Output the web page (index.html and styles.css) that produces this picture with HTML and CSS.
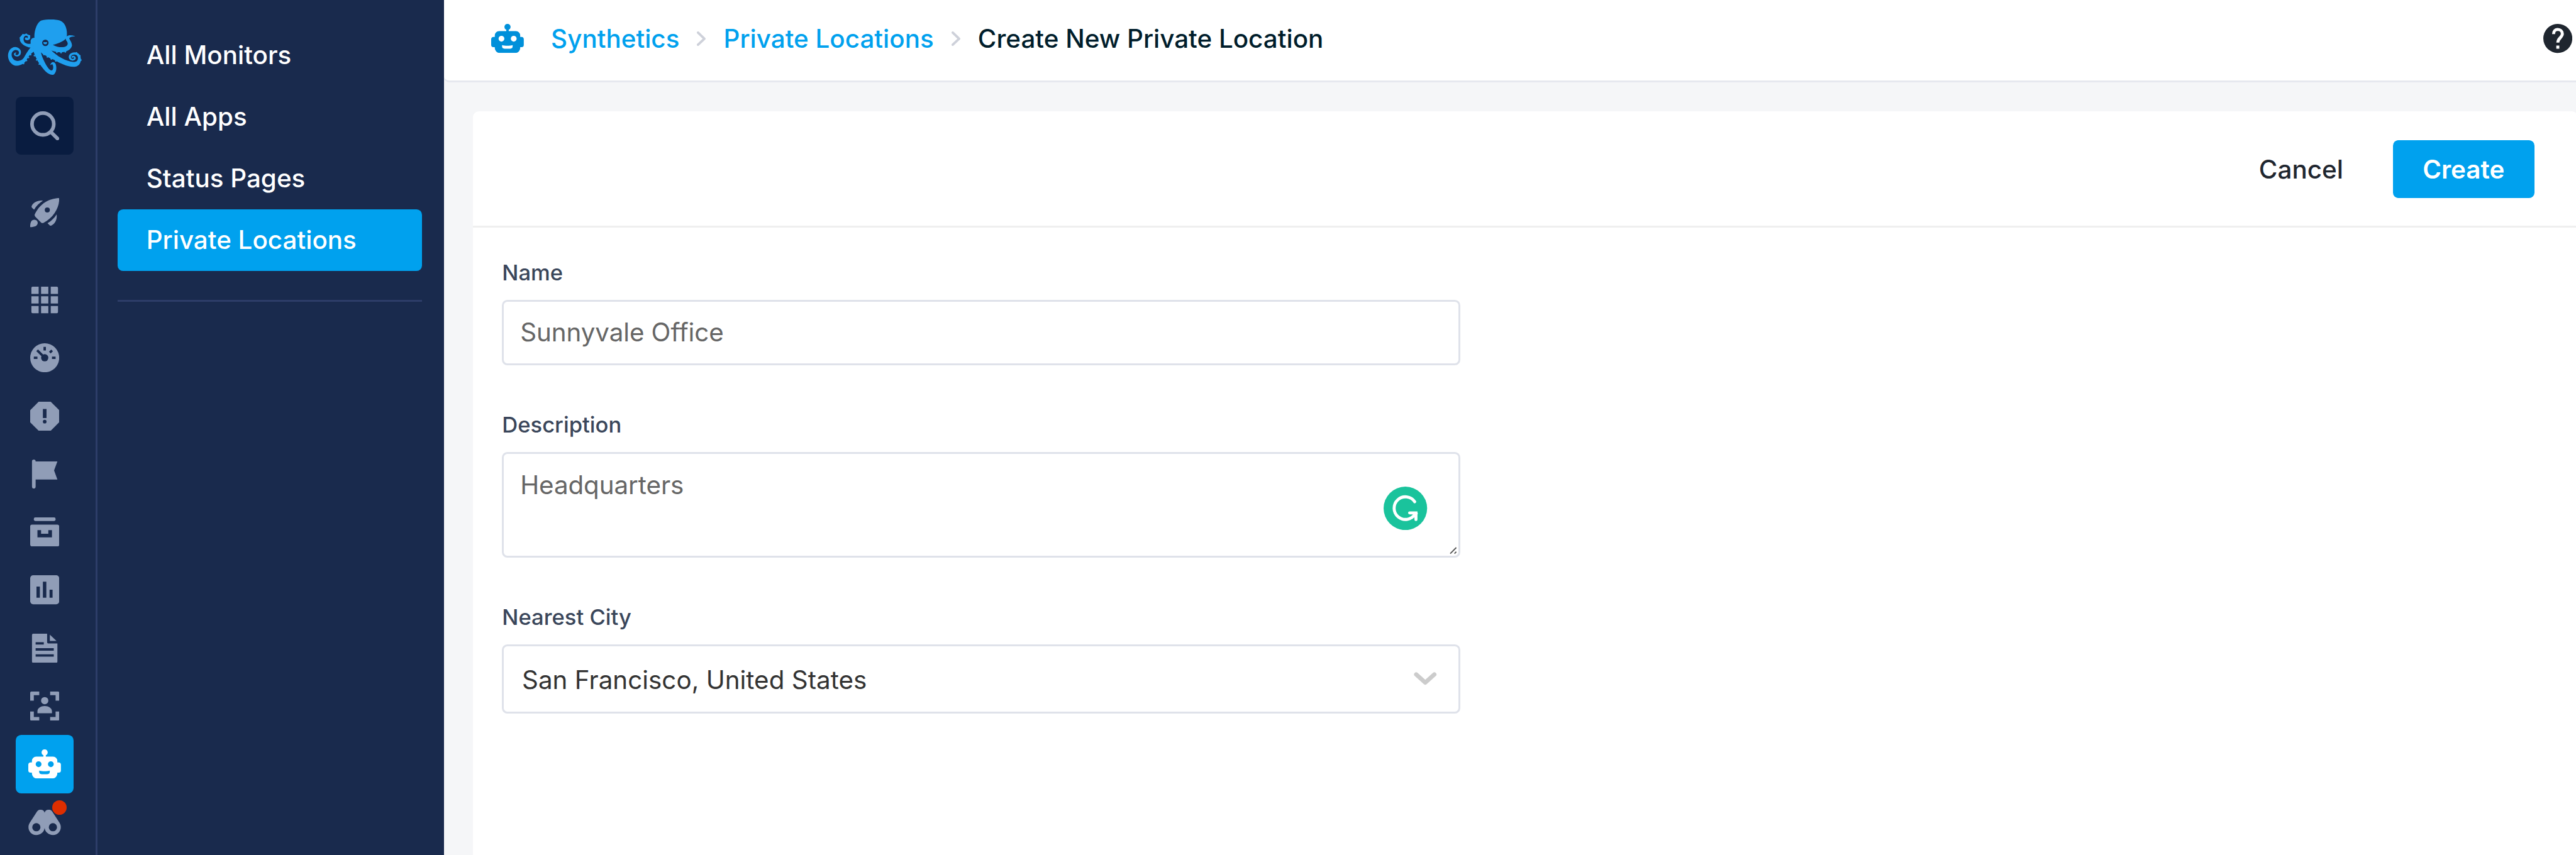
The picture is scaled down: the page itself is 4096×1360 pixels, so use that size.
FILE: index.html
```html
<!DOCTYPE html>
<html lang="en">
<head>
<meta charset="utf-8">
<title>Create New Private Location</title>
<link rel="stylesheet" href="styles.css">
</head>
<body>
<svg class="defs" aria-hidden="true">
  <symbol id="robot" viewBox="0 0 54 48">
    <path fill="currentColor" fill-rule="evenodd" d="M27 0a5 5 0 0 1 2 9.6V12h12a7 7 0 0 1 7 7v2.500h2a4 4 0 0 1 4 4v9a4 4 0 0 1-4 4h-2V40a8 8 0 0 1-8 8H14a8 8 0 0 1-8-8v-1.500H4a4 4 0 0 1-4-4v-9a4 4 0 0 1 4-4h2V19a7 7 0 0 1 7-7h12V9.600A5 5 0 0 1 27 0zM17 19.700a4.800 4.800 0 1 0 0 9.600a4.800 4.800 0 1 0 0-9.600zM37.300 19.700a4.800 4.800 0 1 0 0 9.600a4.800 4.800 0 1 0 0-9.600zM18 35v2a4 4 0 0 0 4 4h9.500a4 4 0 0 0 4-4v-2c-5 1.500-12.500 1.500-17.500 0z"/>
  </symbol>
</svg>
<div class="app">
  <nav class="rail">
    <svg class="logo" viewBox="0 0 450 348">
      <g class="octopus">
        <path d="M171 128C169 92 184 50 206 42C235 35 280 36 298 43C326 54 336 92 331 126C322 142 292 156 262 163C285 177 315 178 328 170C341 161 336 150 328 141C323 127 334 114 350 116C360 116 369 118 373 122C360 120 347 124 343 130C348 142 358 154 357 168C352 188 330 198 308 200C285 201 268 196 252 190L204 202L165 195C154 185 150 170 152 150C150 138 158 128 171 128Z"/>
        <path d="M165 163C150 175 130 205 118 228C105 246 80 248 67 235C52 218 55 195 75 189C92 187 98 200 92 209C88 215 80 215 77 211C76 205 79 203 83 204C80 199 70 202 69 210C70 222 90 226 101 212C110 195 98 176 77 174C50 174 38 200 40 222C43 250 65 268 85 267C105 265 122 254 130 241C140 220 155 205 170 195Z"/>
        <path d="M162 178C135 178 105 162 99 142C96 120 108 112 124 110C142 109 150 117 150 128C149 139 135 144 125 137C120 127 129 122 137 130C141 122 136 117 127 118C115 122 114 142 123 152C135 160 148 158 156 158Z"/>
        <path d="M163 185C172 218 188 250 213 280C230 302 250 316 266 311C281 300 282 275 276 258C270 246 254 244 249 264C254 262 258 257 261 261C266 271 265 287 257 290C247 292 233 272 221 248C212 230 206 216 203 200Z"/>
        <path d="M203 198C213 216 225 212 235 222C250 232 262 232 275 242C300 255 335 274 370 272C395 270 405 245 400 226C397 205 375 196 357 203C340 210 338 225 345 235C355 245 372 243 376 232C378 220 365 214 357 219C353 224 356 229 361 227C366 223 370 228 366 232C357 236 350 230 352 221C358 208 380 208 386 222C390 240 378 250 362 248C330 246 280 220 250 186Z"/>
        <circle cx="114" cy="114" r="5"/><circle cx="130" cy="112" r="5"/><circle cx="101" cy="129" r="4"/><circle cx="146" cy="119" r="4"/>
        <circle cx="152" cy="212" r="4"/><circle cx="141" cy="226" r="4"/><circle cx="131" cy="241" r="4"/><circle cx="117" cy="256" r="4"/>
        <circle cx="171" cy="217" r="4"/><circle cx="182" cy="238" r="4"/><circle cx="195" cy="259" r="4"/>
        <circle cx="218" cy="211" r="4"/><circle cx="235" cy="223" r="4"/><circle cx="255" cy="232" r="5"/><circle cx="277" cy="243" r="4"/>
        <circle cx="282" cy="200" r="4"/><circle cx="303" cy="202" r="4"/><circle cx="324" cy="198" r="4"/>
        <circle cx="379" cy="204" r="5"/><circle cx="396" cy="218" r="4"/><circle cx="401" cy="239" r="4"/>
      </g>
      <circle class="octopus-eye" cx="225" cy="153" r="16"/>
      <path class="octopus" d="M215 149C219 152 221 149 224 150C227 149 230 152 234 149C236 165 213 165 215 149Z"/>
    </svg>
    <a class="tile search"><svg viewBox="0 0 48 48" fill="none" stroke="currentColor" stroke-width="6"><circle cx="21" cy="21" r="18"/><path stroke-linecap="round" d="M34.500 34.500L45 45"/></svg></a>
    <a class="tile rocket"><svg viewBox="0 0 48 48" fill="currentColor"><path fill-rule="evenodd" d="M47 0C32 1 17 8 7.500 27Q7 29 8.500 31L18 40.500Q20 42 22 41C39 32 48 16 48 1.500Q48 0 47 0ZM28.300 15.600a4.200 4.200 0 1 0 0 8.400a4.200 4.200 0 1 0 0-8.400z"/><path d="M21 4.300C13 3 5 7 2.300 13.500Q2 15 3 16L6.500 19.300C10 13 15 8 21 4.300ZM43.700 27C45 35 41 43 34.500 45.700Q33 46 32 45L28.700 41.500C35 38 40 33 43.700 27ZM0 48C0 40 2 36 7 36A6 6 0 0 1 12.500 41C12 46 8 48 0 48Z"/></svg></a>
    <a class="tile"><svg viewBox="0 0 48 48" fill="currentColor"><path d="M4 2h10v12H2V4a2 2 0 0 1 2-2zM18 2h12v12H18zM34 2h10a2 2 0 0 1 2 2v10H34zM2 18h12v12H2zM18 18h12v12H18zM34 18h12v12H34zM2 34h12v12H4a2 2 0 0 1-2-2zM18 34h12v12H18zM34 34h12v10a2 2 0 0 1-2 2H34z"/></svg></a>
    <a class="tile"><svg viewBox="0 0 48 48"><circle cx="24" cy="24" r="24" fill="currentColor"/><circle class="cut" cx="24" cy="24" r="6"/><path class="cut-line" d="M24 6v6M6 24h6M36 24h6M11.500 11.500L22 22M36.200 11.800L32.500 15.500"/></svg></a>
    <a class="tile"><svg viewBox="0 0 48 48"><path fill="currentColor" d="M14 0h20l14 14v20L34 48H14L0 34V14z"/><path class="cut" d="M21 12h6v15h-6z"/><circle class="cut" cx="24" cy="33" r="3"/></svg></a>
    <a class="tile"><svg viewBox="0 0 48 48" fill="currentColor"><path d="M6 0a3 3 0 0 1 3 3H45L39.500 18L45 33H9v12a3 3 0 0 1-6 0V3a3 3 0 0 1 3-3z"/></svg></a>
    <a class="tile"><svg viewBox="0 0 48 48" fill="currentColor"><rect x="6" width="36" height="6" rx="2.500"/><path fill-rule="evenodd" d="M3 12h42a3 3 0 0 1 3 3v30a3 3 0 0 1-3 3H3a3 3 0 0 1-3-3V15a3 3 0 0 1 3-3zM12 21v12h24V21h-6v6H18v-6z"/></svg></a>
    <a class="tile"><svg viewBox="0 0 48 48"><rect width="48" height="48" rx="5" fill="currentColor"/><path class="cut" d="M10.400 18.700h5.600v18.600h-5.600zM21 10.600h5.700v26.700H21zM32 24h5v13.300h-5z"/></svg></a>
    <a class="tile"><svg viewBox="0 0 48 48" fill="currentColor"><path fill-rule="evenodd" d="M5 0h23v14a2 2 0 0 0 2 2h15v30a2 2 0 0 1-2 2H5a2 2 0 0 1-2-2V2a2 2 0 0 1 2-2zM9 14v4h13.500v-4zM9 24v4h30v-4zM9 34v4h30v-4z"/><path d="M32.500 1.500L43.500 12h-11z"/></svg></a>
    <a class="tile"><svg viewBox="0 0 48 48" fill="currentColor"><path d="M2 0h13v6H6v9H0V2a2 2 0 0 1 2-2zM33 0h13a2 2 0 0 1 2 2v13h-6V6h-9zM0 33h6v9h9v6H2a2 2 0 0 1-2-2zM42 33h6v13a2 2 0 0 1-2 2H33v-6h9zM12 36v-3.500C12 27.500 18 24 24 24s12 3.500 12 8.500V36z"/><circle cx="24" cy="15" r="6"/></svg></a>
    <a class="tile current"><svg class="wide"><use href="#robot"/></svg></a>
    <a class="tile"><svg class="wide" viewBox="0 0 54 48" fill="currentColor"><path fill-rule="evenodd" d="M2.200 25L14.500 6C16 3.500 18 3 20.500 3C24 3 26.300 5 27 8C27.700 5 30 3 33.500 3C36 3 38 3.500 39.500 6L51.800 25C57 34 51 45 41 45C33.500 45 27.500 39.500 27 33C26.500 39.500 20.500 45 13 45C3 45-3 34 2.200 25ZM13.300 25.200a6.800 6.800 0 1 0 0 13.600a6.800 6.800 0 1 0 0-13.600zM40.700 25.200a6.800 6.800 0 1 0 0 13.600a6.800 6.800 0 1 0 0-13.600z"/></svg><span class="dot"></span></a>
  </nav>
  <aside class="menu">
    <a class="menu-item">All Monitors</a>
    <a class="menu-item">All Apps</a>
    <a class="menu-item">Status Pages</a>
    <a class="menu-item selected">Private Locations</a>
    <hr class="menu-rule">
  </aside>
  <main class="main">
    <header class="topbar">
      <svg class="crumb-icon"><use href="#robot"/></svg>
      <div class="crumbs">
        <a class="crumb">Synthetics</a>
        <svg class="crumb-sep" viewBox="0 0 15 24"><path d="M2 2L12.500 12L2 22"/></svg>
        <a class="crumb">Private Locations</a>
        <svg class="crumb-sep" viewBox="0 0 15 24"><path d="M2 2L12.500 12L2 22"/></svg>
        <span class="crumb here">Create New Private Location</span>
      </div>
      <svg class="help" viewBox="0 0 48 48"><circle cx="24" cy="24" r="24"/><path d="M17 17C17 11.500 20 9.200 24 9.200S31.500 12 31.500 16.500C31.500 22.500 24 23.500 24 31M24 36v5"/></svg>
    </header>
    <section class="card">
      <div class="card-head">
        <button class="btn cancel">Cancel</button>
        <button class="btn create">Create</button>
      </div>
      <form class="form">
        <div class="field">
          <label class="label">Name</label>
          <div class="box"><span class="hint">Sunnyvale Office</span></div>
        </div>
        <div class="field">
          <label class="label">Description</label>
          <div class="box area"><span class="hint">Headquarters</span>
            <svg class="grammar" viewBox="0 0 72 72"><circle cx="36" cy="36" r="36"/><path d="M51.500 25A18.700 18.700 0 1 0 52 45.500L54 44.500M43 43.500H53.500V54.500"/></svg>
            <svg class="grip" viewBox="0 0 12 12"><path d="M1 11L11 1M8 11l3-3"/></svg>
          </div>
        </div>
        <div class="field">
          <label class="label">Nearest City</label>
          <div class="box select"><span class="value">San Francisco, United States</span>
            <svg class="caret" viewBox="0 0 38 22"><path d="M4 4L19 17.500L34 4"/></svg>
          </div>
        </div>
      </form>
    </section>
  </main>
</div>
</body>
</html>
```
FILE: styles.css
```css
html { font-size: 9.6173px; }
* { box-sizing: border-box; }
body { margin: 0; overflow: hidden; font-family: Inter, "Liberation Sans", sans-serif; }
svg { display: block; flex: none; }
.defs { position: absolute; width: 0; height: 0; }

.app { display: flex; height: 1360px; overflow: hidden; background: #f5f6f8; font-size: 4.2rem; }

.rail { flex: none; width: 16.1rem; padding-top: 2rem; background: #192a4d; border-right: 3px solid #2d3d68; color: #909db7; }
.logo { width: 15rem; height: 11.6rem; margin-bottom: 2.4rem; }
.octopus { fill: #1f9fee; }
.octopus-eye { fill: #192a4d; }
.tile { position: relative; display: flex; align-items: center; justify-content: center; width: 9.6rem; height: 9.6rem; margin-left: 2.6rem; border-radius: 0.9rem; }
.tile svg { width: 4.8rem; height: 4.8rem; }
.tile svg.wide { width: 5.4rem; }
.search { background: #091c40; }
.rocket { margin-top: 4.8rem; margin-bottom: 4.8rem; }
.current { background: #00a1ee; color: #fff; }
.cut { fill: #192a4d; }
.cut-line { fill: none; stroke: #192a4d; stroke-width: 4; }
.dot { position: absolute; top: 1.2rem; right: 1.2rem; width: 2.4rem; height: 2.4rem; border-radius: 50%; background: #de2e00; }

.menu { flex: none; width: 57.3rem; padding: 4rem 3.6rem 0 3.3rem; background: #192a4d; color: #fff; font-weight: 500; }
.menu-item { display: flex; align-items: center; height: 10.2rem; padding-left: 4.8rem; border-radius: 0.9rem; }
.selected { background: #00a1ee; }
.menu-rule { height: 3px; margin: 4.8rem 0 0; border: 0; background: #2d3d68; }

.main { flex: 1; min-width: 0; display: flex; flex-direction: column; }
.topbar { flex: none; display: flex; align-items: center; height: 13.6rem; padding: 0 0.6rem 0.5rem 7.8rem; background: #fff; border-bottom: 3px solid #e6e8ef; border-bottom-left-radius: 0.9rem; }
.crumb-icon { width: 5.4rem; height: 4.8rem; color: #0090da; }
.crumbs { flex: 1; display: flex; align-items: center; margin-left: 4.5rem; }
.crumb { color: #00a1ee; font-weight: 500; }
.here { color: #001d2b; }
.crumb-sep { width: 1.5rem; height: 2.4rem; margin: 0 2.9rem; }
.crumb-sep path { fill: none; stroke: #ced1da; stroke-width: 4; stroke-linecap: round; stroke-linejoin: round; }
.help { width: 4.8rem; height: 4.8rem; }
.help circle { fill: #1f262f; }
.help path { fill: none; stroke: #fff; stroke-width: 5; }

.card { flex: 1; margin: 4.8rem -3px 0 4.8rem; background: #fff; border-radius: 1rem 1rem 0 0; }
.card-head { display: flex; justify-content: flex-end; align-items: center; height: 19.2rem; padding: 0.3rem 7.2rem 0 0; border-bottom: 3px solid #efefef; }
.btn { height: 9.6rem; padding: 0; border: 0; border-radius: 0.9rem; background: none; font: 500 4.2rem Inter, "Liberation Sans", sans-serif; color: #1f262f; }
.cancel { margin-right: 8.2rem; }
.create { width: 23.4rem; background: #00a1ee; color: #fff; font-weight: 600; }

.form { display: flex; flex-direction: column; gap: 7.2rem; width: 158.4rem; margin: 4.8rem 0 0 4.8rem; }
.field { display: flex; flex-direction: column; gap: 2rem; }
.label { height: 5.2rem; line-height: 5.2rem; font-size: 3.6rem; font-weight: 500; color: #3a465a; }
.box { position: relative; display: flex; align-items: center; height: 10.8rem; padding: 0 2.7rem; border: 3px solid #dfe2ea; border-radius: 0.9rem; }
.hint { color: #666; letter-spacing: -0.01rem; }
.area { height: 17.4rem; align-items: flex-start; padding-top: 2.6rem; }
.select { height: 11.4rem; justify-content: space-between; padding: 0 3.5rem 0 3rem; }
.value { position: relative; top: 0.2rem; color: #333; }
.caret { width: 3.8rem; height: 2.2rem; }
.caret path { fill: none; stroke: #ccc; stroke-width: 7; stroke-linecap: round; stroke-linejoin: round; }
.grammar { position: absolute; top: 5.4rem; right: 5.1rem; width: 7.2rem; height: 7.2rem; }
.grammar circle { fill: #1ac39c; }
.grammar path { fill: none; stroke: #fff; stroke-width: 5; stroke-linecap: round; }
.grip { position: absolute; right: 0.2rem; bottom: 0.2rem; width: 1.2rem; height: 1.2rem; }
.grip path { fill: none; stroke: #555; stroke-width: 2; }
```
